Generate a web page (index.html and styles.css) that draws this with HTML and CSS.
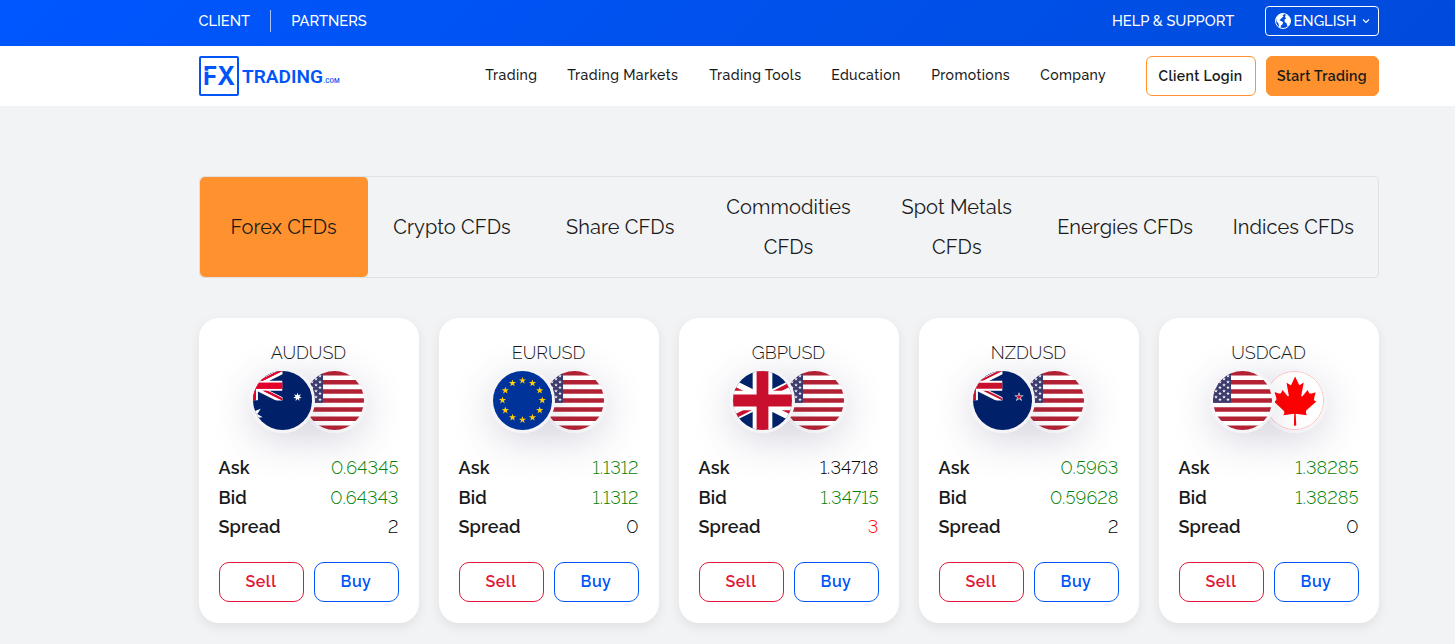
FILE: index.html
```
<!DOCTYPE html>
<html lang="en">
<head>
<meta charset="utf-8">
<title>FX Trading</title>
<link rel="stylesheet" href="styles.css">
</head>
<body>
<svg class="defs" aria-hidden="true">
  <defs>
    <symbol id="uk" viewBox="0 0 60 30">
      <path fill="#012169" d="M0 0h60v30H0z"/>
      <path stroke="#fff" stroke-width="6" d="M0 0l60 30M60 0L0 30"/>
      <path fill="#c8102e" d="M0 0l30 15h-4.500L0 2.200zM60 0L30 15v-2.200L55.500 0zM60 30L30 15h4.500L60 27.800zM0 30l30-15v2.200L4.500 30z"/>
      <path fill="#fff" d="M25 0h10v30H25zM0 10h60v10H0z"/>
      <path fill="#c8102e" d="M27 0h6v30h-6zM0 12h60v6H0z"/>
    </symbol>
    <symbol id="star" viewBox="-10 -10 20 20"><path d="M0-10L2.300-3.100H9.500L3.700 1.200 5.900 8.100 0 3.800-5.900 8.100-3.700 1.200-9.500-3.100H-2.300z"/></symbol>
    <symbol id="star7" viewBox="-10 -10 20 20"><path d="M0-10L1.900-4 7.800-6.200 4.300-1 9.700 2.200 3.500 2.800 4.300 9 0 4.500-4.300 9-3.500 2.800-9.700 2.200-4.300-1-7.800-6.200-1.900-4z"/></symbol>
    <symbol id="flag-us" viewBox="0 0 59 59">
      <path fill="#fff" d="M0 0h59v59H0z"/>
      <path stroke="#b22234" stroke-width="4.540" d="M0 2.270h59M0 11.350h59M0 20.430h59M0 29.500h59M0 38.580h59M0 47.660h59M0 56.730h59"/>
      <path fill="#3c3b6e" d="M0 0h18v31.800H0z"/>
      <g fill="#fff">
        <use href="#star" x="13" y="3" width="4" height="4"/><use href="#star" x="5" y="3" width="4" height="4"/>
        <use href="#star" x="9" y="6" width="4" height="4"/>
        <use href="#star" x="13" y="9" width="4" height="4"/><use href="#star" x="5" y="9" width="4" height="4"/>
        <use href="#star" x="9" y="12" width="4" height="4"/><use href="#star" x="1" y="12" width="4" height="4"/>
        <use href="#star" x="13" y="14.500" width="4" height="4"/><use href="#star" x="5" y="14.500" width="4" height="4"/>
        <use href="#star" x="9" y="18" width="4" height="4"/><use href="#star" x="1" y="18" width="4" height="4"/>
        <use href="#star" x="13" y="20.500" width="4" height="4"/><use href="#star" x="5" y="20.500" width="4" height="4"/>
        <use href="#star" x="9" y="24" width="4" height="4"/><use href="#star" x="1" y="24" width="4" height="4"/>
        <use href="#star" x="13" y="26.500" width="4" height="4"/><use href="#star" x="5" y="26.500" width="4" height="4"/>
      </g>
    </symbol>
    <symbol id="flag-au" viewBox="0 0 59 59">
      <path fill="#00206a" d="M0 0h59v59H0z"/>
      <svg width="29.500" height="29.500" viewBox="30 0 30 30"><use href="#uk" width="60" height="30"/><path fill="#e4002b" d="M30 12h30v6H30zM30 20h3v10h-3zM60 0L40 10h-4.500L55.500 0zM60 30L40 20h4.500L60 27.800z"/></svg>
      <use href="#star7" fill="#fff" x="40" y="21.500" width="9" height="9"/>
      <use href="#star7" fill="#fff" x="-10" y="34" width="20" height="20"/>
    </symbol>
    <symbol id="flag-nz" viewBox="0 0 59 59">
      <path fill="#00206a" d="M0 0h59v59H0z"/>
      <svg width="29.500" height="29.500" viewBox="30 0 30 30"><use href="#uk" width="60" height="30"/></svg>
      <use href="#star" fill="#fff" x="41" y="21" width="10" height="10"/>
      <use href="#star" fill="#c8102e" x="42.700" y="22.800" width="6.600" height="6.600"/>
    </symbol>
    <symbol id="flag-gb" viewBox="0 0 59 59"><use href="#uk" x="-29.500" width="118" height="59"/></symbol>
    <symbol id="flag-eu" viewBox="0 0 59 59">
      <path fill="#039" d="M0 0h59v59H0z"/>
      <g fill="#fc0">
        <use href="#star" x="25.700" y="5.800" width="7.600" height="7.600"/><use href="#star" x="35.700" y="8.400" width="7.600" height="7.600"/>
        <use href="#star" x="42.900" y="15.700" width="7.600" height="7.600"/><use href="#star" x="45.500" y="25.500" width="7.600" height="7.600"/>
        <use href="#star" x="42.900" y="35.500" width="7.600" height="7.600"/><use href="#star" x="35.700" y="42.700" width="7.600" height="7.600"/>
        <use href="#star" x="25.700" y="45.100" width="7.600" height="7.600"/><use href="#star" x="15.700" y="42.700" width="7.600" height="7.600"/>
        <use href="#star" x="8.500" y="35.500" width="7.600" height="7.600"/><use href="#star" x="5.700" y="25.500" width="7.600" height="7.600"/>
        <use href="#star" x="8.500" y="15.700" width="7.600" height="7.600"/><use href="#star" x="15.700" y="8.400" width="7.600" height="7.600"/>
      </g>
    </symbol>
    <symbol id="flag-ca" viewBox="0 0 59 59">
      <path fill="#fff" d="M0 0h59v59H0z"/>
      <circle cx="29.500" cy="29.500" r="29.200" fill="none" stroke="#f88" stroke-width=".6"/>
      <path fill="red" transform="translate(-22.400 -11.300) scale(.1664 .1764)" d="M201 232l-13.300 4.400 61.400 54c4.700 13.700-1.600 17.800-5.600 25l66.600-8.400-1.600 67 13.900-.3-3.100-66.600 66.700 8c-4.100-8.700-7.800-13.300-4-27.200l61.300-51-10.700-4c-8.800-6.800 3.800-32.600 5.600-48.900 0 0-35.700 12.300-38 5.800l-9.200-17.500-32.600 35.800c-3.500.9-5-.5-5.900-3.500l15-74.800-23.800 13.400c-2 .9-4 .1-5.200-2.200l-23-46-23.600 47.800c-1.800 1.700-3.600 1.900-5 .7L264 130.800l13.700 74.100c-1.100 3-3.700 3.800-6.700 2.200l-31.200-35.300c-4 6.500-6.800 17.100-12.200 19.500-5.400 2.300-23.500-4.500-35.600-7 4.200 14.800 17 39.600 9 47.700z"/>
    </symbol>
  </defs>
</svg>

<div class="topbar">
  <div class="wrap topbar-row">
    <a class="top-client">CLIENT</a>
    <i class="top-divider"></i>
    <a class="top-partners">PARTNERS</a>
    <a class="top-help">HELP &amp; SUPPORT</a>
    <button class="lang">
      <svg class="globe" viewBox="0 0 16 16"><circle cx="8" cy="8" r="7.500" fill="none" stroke="#fff"/><path fill="#fff" d="M1 5.500L3.500 1.800 7 .6 9 1.200 7.500 2.500 8.600 3.600 7 4.800 5.700 6 4.500 7.200 6.200 8 8.200 9.300 7.600 11.200 6 12.400 5.500 15 4 13.600 3.500 10.500 1.800 8.800zM10 2.500L12.500 2 15 5.200 15.500 9 13.500 12.500 12.200 13 11.600 10.200 9.600 9 9.600 6.600 11.200 5.200 10.200 4.200z"/></svg>
      <span>ENGLISH</span>
      <svg class="chev" viewBox="0 0 8 6"><path d="M1 1.500l3 3 3-3" fill="none" stroke="#fff" stroke-width="1.100"/></svg>
    </button>
  </div>
</div>

<header class="header">
  <div class="wrap header-row">
    <svg class="logo" viewBox="0 0 142 40">
      <rect x="1" y="1" width="38" height="38" rx="1" fill="none" stroke="#0055f9" stroke-width="2"/>
      <text class="logo-fx" x="4" y="28.800" textLength="32" lengthAdjust="spacingAndGlyphs">FX</text>
      <path d="M4 15.200h8l5-1.500" fill="none" stroke="#fff" stroke-width="1"/>
      <text class="logo-name" x="43" y="27" textLength="81" lengthAdjust="spacingAndGlyphs">TRADING</text>
      <text class="logo-com" x="124.500" y="27" textLength="16" lengthAdjust="spacingAndGlyphs">.COM</text>
    </svg>
    <nav class="nav">
      <a>Trading</a><a>Trading Markets</a><a>Trading Tools</a><a>Education</a><a>Promotions</a><a>Company</a>
    </nav>
    <a class="cta cta-login">Client Login</a>
    <a class="cta cta-start">Start Trading</a>
  </div>
</header>

<main class="wrap">
  <div class="tabs">
    <a class="tab active">Forex CFDs</a>
    <a class="tab">Crypto CFDs</a>
    <a class="tab">Share CFDs</a>
    <a class="tab">Commodities CFDs</a>
    <a class="tab">Spot Metals CFDs</a>
    <a class="tab">Energies CFDs</a>
    <a class="tab">Indices CFDs</a>
  </div>
  <div class="cards">
    <article class="card">
      <h2>AUDUSD</h2>
      <div class="flags"><svg><use href="#flag-au"/></svg><svg><use href="#flag-us"/></svg></div>
      <dl><dt>Ask</dt><dd class="up">0.64345</dd><dt>Bid</dt><dd class="up">0.64343</dd><dt>Spread</dt><dd>2</dd></dl>
      <div class="actions"><button class="sell">Sell</button><button class="buy">Buy</button></div>
    </article>
    <article class="card">
      <h2>EURUSD</h2>
      <div class="flags"><svg><use href="#flag-eu"/></svg><svg><use href="#flag-us"/></svg></div>
      <dl><dt>Ask</dt><dd class="up">1.1312</dd><dt>Bid</dt><dd class="up">1.1312</dd><dt>Spread</dt><dd>0</dd></dl>
      <div class="actions"><button class="sell">Sell</button><button class="buy">Buy</button></div>
    </article>
    <article class="card">
      <h2>GBPUSD</h2>
      <div class="flags"><svg><use href="#flag-gb"/></svg><svg><use href="#flag-us"/></svg></div>
      <dl><dt>Ask</dt><dd>1.34718</dd><dt>Bid</dt><dd class="up">1.34715</dd><dt>Spread</dt><dd class="down">3</dd></dl>
      <div class="actions"><button class="sell">Sell</button><button class="buy">Buy</button></div>
    </article>
    <article class="card">
      <h2>NZDUSD</h2>
      <div class="flags"><svg><use href="#flag-nz"/></svg><svg><use href="#flag-us"/></svg></div>
      <dl><dt>Ask</dt><dd class="up">0.5963</dd><dt>Bid</dt><dd class="up">0.59628</dd><dt>Spread</dt><dd>2</dd></dl>
      <div class="actions"><button class="sell">Sell</button><button class="buy">Buy</button></div>
    </article>
    <article class="card">
      <h2>USDCAD</h2>
      <div class="flags"><svg><use href="#flag-us"/></svg><svg><use href="#flag-ca"/></svg></div>
      <dl><dt>Ask</dt><dd class="up">1.38285</dd><dt>Bid</dt><dd class="up">1.38285</dd><dt>Spread</dt><dd>0</dd></dl>
      <div class="actions"><button class="sell">Sell</button><button class="buy">Buy</button></div>
    </article>
  </div>
</main>
</body>
</html>
```
FILE: styles.css
```
* { box-sizing: border-box; }
body { margin: 0; height: 644px; overflow: hidden; background: #f2f3f5; color: #1a1a1a; font-family: Raleway, Lato, "Open Sans", sans-serif; font-variant-numeric: lining-nums; }
button { font: inherit; font-variant-numeric: inherit; background: none; margin: 0; padding: 0; }
.defs { display: block; width: 0; height: 0; }
.wrap { width: 1180px; margin-left: 198.500px; }

.topbar { height: 46px; background: linear-gradient(135deg, #0057ff, #004bdb); color: #fff; font-size: 14.660px; font-weight: 500; }
.topbar-row { display: flex; align-items: center; height: 42px; white-space: nowrap; }
.topbar a, .lang span { padding-bottom: 2px; }
.lang span { display: block; }
.top-client { width: 71px; }
.top-divider { width: 1px; height: 22px; margin-right: 20.700px; background: #a9c4fb; }
.top-help { margin-left: auto; width: 122.500px; }
.lang { display: flex; align-items: center; width: 114px; height: 30px; margin-left: 30px; padding: 0 8px 0 9px; border: 1px solid #fff; border-radius: 4px; color: #fff; }
.globe { width: 16px; height: 16px; margin-right: 3px; }
.chev { width: 8px; height: 6px; margin-left: auto; }

.header { height: 60px; background: #fff; }
.header-row { display: flex; align-items: center; height: 60px; }
.logo { width: 142px; height: 40px; margin-left: .5px; margin-right: -.5px; fill: #0055f9; overflow: visible; }
.logo-fx { font: 700 25px Inter, sans-serif; }
.logo-name { font: 600 19px Roboto, sans-serif; }
.logo-com { font: 500 8px Roboto, sans-serif; }
.nav { display: grid; grid-template-columns: 52px 112px 92px 70px 79px 66px; gap: 30px; margin: -2px 0 0 144.700px; font-size: 14px; font-weight: 500; letter-spacing: .4px; white-space: nowrap; }
.cta { height: 40px; line-height: 38px; border: 1px solid #ff922e; border-radius: 6px; font-size: 14px; font-weight: 600; letter-spacing: .38px; text-align: center; white-space: nowrap; }
.cta-login { width: 110px; margin-left: auto; }
.cta-start { width: 113px; margin-left: 10px; background: #ff922e; }

.tabs { display: grid; grid-template-columns: repeat(7, 1fr); height: 102px; margin-top: 70px; border: 1px solid #dfe1e5; border-radius: 5px; font-size: 20px; letter-spacing: .08px; line-height: 40px; text-align: center; }
.tab { display: flex; align-items: center; justify-content: center; padding: 0 15px; border-radius: 5px; }
.active { background: #ff922e; }

.cards { display: grid; grid-template-columns: repeat(5, 220px); gap: 20px; margin-top: 40px; }
.card { height: 305px; padding: 20px; border-radius: 20px; background: #fff; box-shadow: 0 4px 12px rgba(0, 0, 0, .08); }
.card h2 { margin: 0; font-size: 18px; font-weight: 300; line-height: 30px; text-align: center; }
.flags { display: flex; justify-content: center; height: 65px; }
.flags svg { position: relative; z-index: 1; flex: none; width: 65px; height: 65px; border: 3px solid #f5f5f8; border-radius: 50%; box-shadow: 0 10px 40px rgba(68, 58, 110, .2); }
.flags svg + svg { z-index: 0; margin-left: -13px; }
dl { position: relative; z-index: 2; display: grid; grid-template-columns: auto 1fr; margin: 20px 0 0; font-size: 18px; line-height: 29.600px; }
dt { font-weight: 600; letter-spacing: .15px; }
dd { margin: 0; font-weight: 300; letter-spacing: .12px; text-align: right; color: #000; }
.up { color: #008000; }
.down { color: #f00; }
.actions { display: grid; grid-template-columns: 1fr 1fr; gap: 10px; margin-top: 20px; }
.actions button { height: 40px; border: 1px solid; border-radius: 10px; font-size: 16px; font-weight: 600; letter-spacing: .5px; }
.sell { color: #e31837; }
.buy { color: #0055f9; }
```
